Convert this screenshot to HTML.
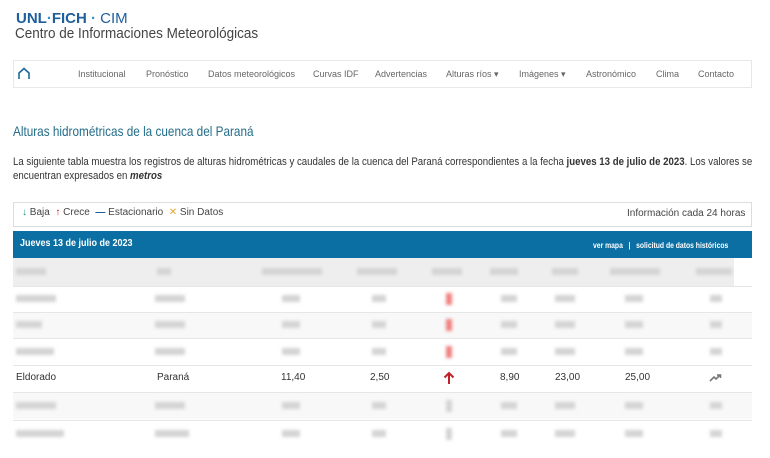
<!DOCTYPE html>
<html><head><meta charset="utf-8"><style>
*{margin:0;padding:0;box-sizing:border-box}
body{width:770px;height:458px;overflow:hidden;background:#fff;font-family:"Liberation Sans",sans-serif;color:#333;position:relative}
.a{position:absolute;white-space:nowrap}
.sx{transform-origin:0 0}
.nav span{position:absolute;top:69px;font-size:9px;color:#666}
.row{position:absolute;left:13px;width:739px;height:27px;border-top:1px solid #e6e6e6}
.b{position:absolute;height:7px;background:#d4d4d4;filter:blur(1.5px)}
.r{background:#f08080}
</style></head><body>
<div class="a" style="left:16px;top:10px;font-size:15px;font-weight:bold;color:#1d5e9c">UNL<span style="color:#2a8fd0">·</span>FICH<span style="color:#2a8fd0"> · </span><span style="font-weight:normal;color:#1d5e9c">CIM</span></div>
<div class="a sx" style="left:15px;top:25px;font-size:15px;color:#444;transform:scaleX(0.9)">Centro de Informaciones Meteorológicas</div>
<div class="a" style="left:13px;top:60px;width:739px;height:28px;border:1px solid #e8e8e8"></div>
<svg class="a" style="left:17px;top:67px" width="14" height="13" viewBox="0 0 14 13"><path d="M2 12V6L7 1.5L12 6V12" fill="none" stroke="#1d6a9a" stroke-width="1.6"/></svg>
<div class="nav">
<span style="left:78px">Institucional</span><span style="left:146px">Pronóstico</span><span style="left:208px">Datos meteorológicos</span><span style="left:313px">Curvas IDF</span><span style="left:375px">Advertencias</span><span style="left:446px">Alturas ríos ▾</span><span style="left:519px">Imágenes ▾</span><span style="left:586px">Astronómico</span><span style="left:656px">Clima</span><span style="left:698px">Contacto</span>
</div>
<div class="a sx" style="left:13px;top:123px;font-size:14px;color:#236d8a;transform:scaleX(0.84)">Alturas hidrométricas de la cuenca del Paraná</div>
<div class="a sx" style="left:13px;top:156px;font-size:11px;color:#333;transform:scaleX(0.878)">La siguiente tabla muestra los registros de alturas hidrométricas y caudales de la cuenca del Paraná correspondientes a la fecha <b>jueves 13 de julio de 2023</b>. Los valores se</div>
<div class="a sx" style="left:13px;top:170px;font-size:11px;color:#333;transform:scaleX(0.878)">encuentran expresados en <b><i>metros</i></b></div>
<div class="a" style="left:13px;top:202px;width:739px;height:25px;border:1px solid #ddd"></div>
<div class="a" style="left:22px;top:207px;font-size:10px;color:#444"><span style="color:#1a9a80">↓</span> Baja &nbsp;<span style="color:#c0202a">↑</span> Crece &nbsp;<span style="color:#1d5e9c;font-weight:bold">—</span> Estacionario &nbsp;<span style="color:#e8a830">✕</span> Sin Datos</div>
<div class="a" style="left:627px;top:208px;font-size:10px;color:#444">Información cada 24 horas</div>
<div class="a" style="left:13px;top:231px;width:739px;height:27px;background:#0b6fa3"></div>
<div class="a sx" style="left:20px;top:238px;font-size:10px;font-weight:bold;color:#fff;transform:scaleX(0.9)">Jueves 13 de julio de 2023</div>
<div class="a sx" style="left:593px;top:240px;font-size:8.5px;font-weight:bold;color:#fff;transform:scaleX(0.8)">ver mapa &nbsp; | &nbsp; solicitud de datos históricos</div>
<div class="a" style="left:13px;top:258px;width:721px;height:28px;background:#eee"></div>
<div class="b" style="left:16px;top:268px;width:30px"></div><div class="b" style="left:157px;top:268px;width:14px"></div><div class="b" style="left:262px;top:268px;width:60px"></div><div class="b" style="left:357px;top:268px;width:40px"></div><div class="b" style="left:432px;top:268px;width:30px"></div><div class="b" style="left:490px;top:268px;width:28px"></div><div class="b" style="left:552px;top:268px;width:26px"></div><div class="b" style="left:610px;top:268px;width:50px"></div><div class="b" style="left:696px;top:268px;width:36px"></div>
<div class="row" style="top:286px"></div><div class="row" style="top:312px;background:#f8f8f8"></div><div class="row" style="top:338px"></div>
<div class="row" style="top:365px"></div><div class="row" style="top:392px;background:#f8f8f8"></div><div class="row" style="top:420px"></div>
<div class="b" style="left:16px;top:295px;width:40px"></div><div class="b" style="left:155px;top:295px;width:30px"></div><div class="b" style="left:282px;top:295px;width:18px"></div><div class="b" style="left:372px;top:295px;width:14px"></div><div class="b r" style="left:446px;top:293px;width:6px;height:12px"></div><div class="b" style="left:501px;top:295px;width:16px"></div><div class="b" style="left:555px;top:295px;width:20px"></div><div class="b" style="left:625px;top:295px;width:18px"></div><div class="b" style="left:710px;top:295px;width:12px"></div>
<div class="b" style="left:16px;top:321px;width:26px"></div><div class="b" style="left:155px;top:321px;width:30px"></div><div class="b" style="left:282px;top:321px;width:18px"></div><div class="b" style="left:372px;top:321px;width:14px"></div><div class="b r" style="left:446px;top:319px;width:6px;height:12px"></div><div class="b" style="left:501px;top:321px;width:16px"></div><div class="b" style="left:555px;top:321px;width:20px"></div><div class="b" style="left:625px;top:321px;width:18px"></div><div class="b" style="left:710px;top:321px;width:12px"></div>
<div class="b" style="left:16px;top:348px;width:38px"></div><div class="b" style="left:155px;top:348px;width:30px"></div><div class="b" style="left:282px;top:348px;width:18px"></div><div class="b" style="left:372px;top:348px;width:14px"></div><div class="b r" style="left:446px;top:346px;width:6px;height:12px"></div><div class="b" style="left:501px;top:348px;width:16px"></div><div class="b" style="left:555px;top:348px;width:20px"></div><div class="b" style="left:625px;top:348px;width:18px"></div><div class="b" style="left:710px;top:348px;width:12px"></div>
<div class="a" style="left:16px;top:372px;font-size:10px;color:#333">Eldorado</div>
<div class="a" style="left:157px;top:372px;font-size:10px;color:#333">Paraná</div>
<div class="a" style="left:281px;top:372px;font-size:10px;color:#333">11,40</div>
<div class="a" style="left:370px;top:372px;font-size:10px;color:#333">2,50</div>
<svg class="a" style="left:443px;top:371px" width="12" height="14" viewBox="0 0 12 14"><path d="M6 13V2M1.5 6.5L6 2L10.5 6.5" fill="none" stroke="#c0202a" stroke-width="2"/></svg>
<div class="a" style="left:500px;top:372px;font-size:10px;color:#333">8,90</div>
<div class="a" style="left:555px;top:372px;font-size:10px;color:#333">23,00</div>
<div class="a" style="left:625px;top:372px;font-size:10px;color:#333">25,00</div>
<svg class="a" style="left:709px;top:374px" width="13" height="8" viewBox="0 0 13 8"><path d="M1 7L5 3L7 5L11 1M8 1H11.5V4" fill="none" stroke="#777" stroke-width="1.6"/></svg>
<div class="b" style="left:16px;top:402px;width:40px"></div><div class="b" style="left:155px;top:402px;width:30px"></div><div class="b" style="left:282px;top:402px;width:18px"></div><div class="b" style="left:372px;top:402px;width:14px"></div><div class="b" style="left:446px;top:400px;width:6px;height:12px"></div><div class="b" style="left:501px;top:402px;width:16px"></div><div class="b" style="left:555px;top:402px;width:20px"></div><div class="b" style="left:625px;top:402px;width:18px"></div><div class="b" style="left:710px;top:402px;width:12px"></div>
<div class="b" style="left:16px;top:430px;width:48px"></div><div class="b" style="left:155px;top:430px;width:34px"></div><div class="b" style="left:282px;top:430px;width:18px"></div><div class="b" style="left:372px;top:430px;width:14px"></div><div class="b" style="left:446px;top:428px;width:6px;height:12px"></div><div class="b" style="left:501px;top:430px;width:16px"></div><div class="b" style="left:555px;top:430px;width:20px"></div><div class="b" style="left:625px;top:430px;width:18px"></div><div class="b" style="left:710px;top:430px;width:12px"></div>
</body></html>
